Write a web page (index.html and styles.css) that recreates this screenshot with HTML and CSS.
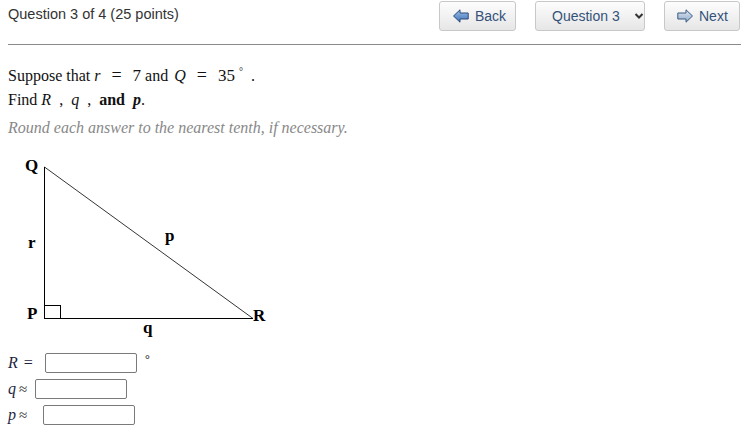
FILE: index.html
```html
<!DOCTYPE html>
<html>
<head>
<meta charset="utf-8">
<link rel="stylesheet" href="styles.css">
</head>
<body>
<div class="page">
  <header class="top">
    <div class="title">Question 3 of 4 (25 points)</div>
    <div class="nav">
      <button class="btn back">
        <svg width="16" height="14" viewBox="0 0 16 14"><defs><linearGradient id="gb" x1="0" y1="0" x2="0" y2="1"><stop offset="0" stop-color="#9cc0e8"/><stop offset="1" stop-color="#3f72b8"/></linearGradient></defs><path d="M0.5 7 L7 0.8 L7 4 L15.2 4 L15.2 10 L7 10 L7 13.2 Z" fill="url(#gb)" stroke="#2a4a78" stroke-width="1" stroke-linejoin="round"/></svg>
        <span>Back</span>
      </button>
      <button class="btn select">
        <span>Question 3</span>
        <svg class="chev" width="10" height="8" viewBox="0 0 10 8"><path d="M1.5 2 L5 5.5 L8.5 2" fill="none" stroke="#333" stroke-width="2"/></svg>
      </button>
      <button class="btn next">
        <svg width="16" height="14" viewBox="0 0 16 14"><defs><linearGradient id="gn" x1="0" y1="0" x2="0" y2="1"><stop offset="0" stop-color="#dfe8f2"/><stop offset="1" stop-color="#8ea9c8"/></linearGradient></defs><path d="M15.5 7 L9 0.8 L9 4 L0.8 4 L0.8 10 L9 10 L9 13.2 Z" fill="url(#gn)" stroke="#3b5a80" stroke-width="1" stroke-linejoin="round"/></svg>
        <span>Next</span>
      </button>
    </div>
  </header>
  <div class="rule"></div>
  <div class="question">
    <p class="line">Suppose that <i class="m">r</i><span class="eq">=</span><span class="num">7</span> and <i class="m mq">Q</i><span class="eq">=</span><span class="num">35</span><span class="deg">°</span>&nbsp;&nbsp;.</p>
    <p class="line">Find <i class="m">R</i><span class="comma">,</span><i class="m">q</i><span class="comma">,</span><b class="bold">and</b><i class="m bold mp">p</i>.</p>
    <p class="hint">Round each answer to the nearest tenth, if necessary.</p>
  </div>
  <svg class="tri" width="290" height="190" viewBox="0 0 290 190">
    <line x1="44.5" y1="16" x2="44.5" y2="167.5" stroke="#000" stroke-width="1"/>
    <line x1="44" y1="167.5" x2="253" y2="167.5" stroke="#000" stroke-width="1"/>
    <line x1="44.5" y1="16" x2="253" y2="167.5" stroke="#000" stroke-width="0.8"/>
    <rect x="44.5" y="154.5" width="16" height="13" fill="none" stroke="#000" stroke-width="1"/>
    <text x="25" y="20" class="lbl">Q</text>
    <text x="28" y="97" class="lbl">r</text>
    <text x="165" y="90" class="lbl">p</text>
    <text x="27" y="168" class="lbl">P</text>
    <text x="253" y="170" class="lbl">R</text>
    <text x="143" y="182" class="lbl">q</text>
  </svg>
  <div class="answers">
    <div class="row"><span class="lab lab-r"><i class="m">R</i><span class="op">=</span></span><input class="box" type="text"><span class="unit">°</span></div>
    <div class="row"><span class="lab lab-q"><i class="m">q</i><span class="op2">≈</span></span><input class="box" type="text"></div>
    <div class="row"><span class="lab lab-p"><i class="m">p</i><span class="op2">≈</span></span><input class="box" type="text"></div>
  </div>
</div>
</body>
</html>
```
FILE: styles.css
```css
* { box-sizing: border-box; }
html, body { margin: 0; padding: 0; background: #fff; }
body { font-family: "Liberation Serif", "Times New Roman", serif; color: #111; }
.page { width: 754px; padding: 0 14px 0 8px; }
.top {
  display: flex;
  justify-content: space-between;
  align-items: flex-start;
  height: 44px;
  padding-top: 1px;
}
.title {
  font-family: "Liberation Sans", Arial, sans-serif;
  font-size: 14.5px;
  color: #333;
  padding-top: 5px;
}
.nav { display: flex; gap: 19px; }
.btn {
  display: flex;
  align-items: center;
  height: 30px;
  border: 1px solid #c8c8c8;
  border-radius: 3px;
  background: linear-gradient(#fdfdfd, #e6e6e6);
  font-family: "Liberation Sans", Arial, sans-serif;
  font-size: 14px;
  color: #34527a;
  padding: 0;
  margin: 0;
}
.back { width: 77px; padding-left: 13px; gap: 6px; }
.select { width: 110px; padding-left: 16px; }
.select .chev { margin-left: 14px; }
.next { width: 76px; padding-left: 12px; gap: 6px; }
.rule { height: 1px; background: #8a8a8a; width: 733px; }
.question { padding-top: 19px; }
.line { margin: 0; font-size: 16px; line-height: 24px; height: 24px; color: #111; }
.m { font-family: "Liberation Serif", "Times New Roman", serif; font-style: italic; }
.mq { margin-left: 2px; }
.bold { font-weight: bold; }
.eq { display: inline-block; margin: 0 11px; font-size: 18px; line-height: 16px; }
.num { font-size: 17px; }
.deg { font-size: 10px; position: relative; top: -6px; margin-left: 4px; }
.comma { display: inline-block; margin: 0 8px; }
.mp { margin-left: 8px; }
.hint { margin: 6px 0 0; font-size: 16px; font-style: italic; color: #888; line-height: 20px; height: 20px; }
.tri { display: block; margin-left: -8px; margin-top: 13px; }
.lbl { font-family: "Liberation Serif", "Times New Roman", serif; font-weight: bold; font-size: 17px; fill: #000; }
.answers { display: flex; flex-direction: column; gap: 6px; margin-top: 12px; }
.row { display: flex; align-items: center; height: 20px; font-size: 16px; }
.lab { display: inline-flex; align-items: center; color: #1c2540; }
.lab-r { width: 37px; }
.lab-q { width: 27px; }
.lab-p { width: 35px; }
.op { margin-left: 6px; }
.op2 { margin-left: 3px; font-size: 15px; color: #333; }
.box {
  width: 92px;
  height: 20px;
  border: 1px solid #7a7a7a;
  border-radius: 2px;
  padding: 0;
  margin: 0;
}
.unit { margin-left: 8px; font-size: 12px; position: relative; top: -4px; }
```
